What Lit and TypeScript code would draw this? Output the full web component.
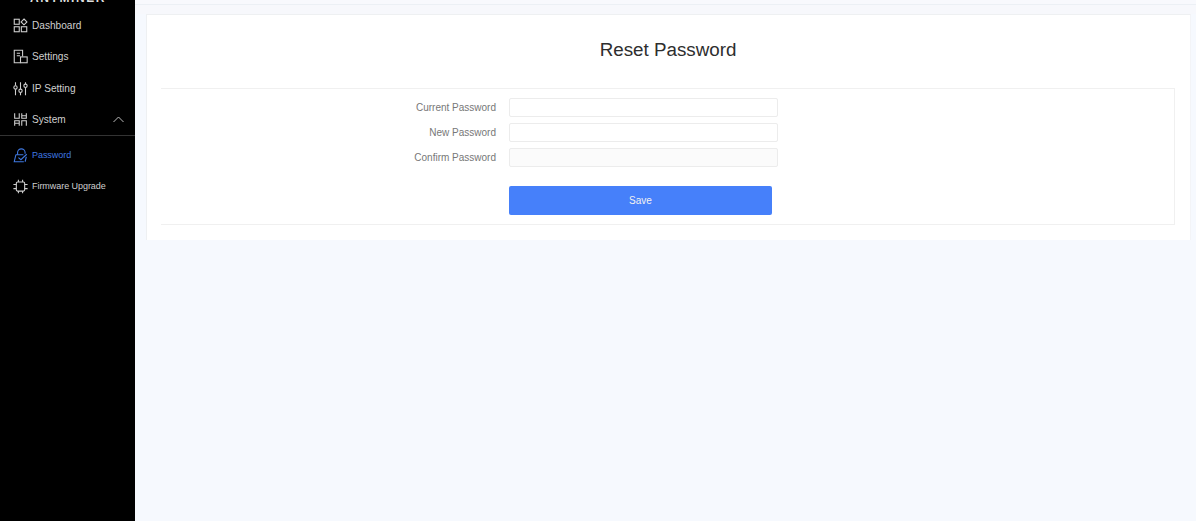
import { LitElement, html, css, svg } from "lit";
import { customElement } from "lit/decorators.js";

const icons = {
  dash: svg`<rect x="1.500" y="1.500" width="6" height="6"/><path d="M13.200 1.200 16.700 4.700 13.200 8.200 9.700 4.700Z"/><rect x="1.500" y="10.500" width="6" height="6"/><rect x="10" y="10.500" width="6.500" height="6"/>`,
  settings: svg`<path d="M9 16.500H1.500V1.500h10v7.500"/><path d="M4.500 5h4M4.500 8h4"/><rect x="9" y="9.500" width="8" height="7"/>`,
  ip: svg`<path d="M3 1.500v4M3 10v7M9 1.500v8M9 14v3M15 1.500v2M15 8v9"/><circle cx="3" cy="7.700" r="2"/><circle cx="9" cy="11.700" r="2"/><circle cx="15" cy="5.700" r="2"/>`,
  system: svg`<path d="M2 1.500v6h5.500v-6M10.500 1.500v6H16v-6M10.500 4.500H16"/><path d="M2 16.500v-6h5.500v6M2 13.500h5.500M10.500 16.500v-6H16v6"/>`,
  lock: svg`<path d="M5.500 8V5.500a4.500 4.500 0 0 1 9 0V7"/><path d="M3.500 8h9M3.500 8 1.500 16.500h11.500M16 10.500l-1.500 6"/><path d="m6.500 11.500 3 2.500 7-6.500"/>`,
  chip: svg`<rect x="4" y="3.500" width="10" height="11" rx="1.500"/><path d="M.5 6.500H4M.5 11.500H4M14 6.500h3.500M14 11.500h3.500M6.500 1v2.500M11.500 1v2.500M6.500 14.500V17M11.500 14.500V17"/>`,
};

@customElement("app-root")
export class AppRoot extends LitElement {
  static styles = css`
    :host { display: block; height: 521px; overflow: hidden; font-family: "Liberation Sans", Arial, sans-serif; background: #f6f9fe; }
    .app { display: flex; height: 521px; }
    .side { width: 135px; flex: none; background: #000; color: #cfcfcf; overflow: hidden; position: relative; }
    .logo { position: absolute; top: -9px; left: 30px; font-size: 12px; letter-spacing: 1.6px; font-weight: 700; color: #ddd; line-height: 14px; }
    .menu { display: flex; flex-direction: column; padding-top: 9px; }
    .item { box-sizing: border-box; height: 31.3px; display: flex; align-items: center; padding: 2px 0 0 13px; font-size: 10.1px; position: relative; }
    .icon { width: 15px; height: 15px; fill: none; stroke: #cfcfcf; stroke-width: 1.3; flex: none; margin-right: 4px; }
    .sys { border-bottom: 1px solid #333; height: 33px; padding-top: 1px; }
    .chev { position: absolute; left: 113px; top: 13px; width: 11px; height: 7px; fill: none; stroke: #bbb; stroke-width: 1; }
    .sub { font-size: 9px; letter-spacing: -0.05px; padding-top: 1px; }
    .sub.first { margin-top: 3px; }
    .active { color: #3f78e0; }
    .active .icon { stroke: #3f78e0; }
    .main { flex: 1; min-width: 0; display: flex; flex-direction: column; }
    .strip { height: 4px; background: #f8f9fd; border-bottom: 1px solid #ecf0f5; }
    .gap { height: 9px; background: #f7f8fc; }
    .card { margin-left: 11px; margin-right: 5px; height: 226px; background: #fff; border: 1px solid #eef0f2; border-bottom: none; border-right-color: #f3f4f7; box-sizing: border-box; padding: 0 15px 0 14px; }
    h1 { font-size: 18.800px; font-weight: 400; color: #2e2e2e; text-align: center; margin: 25px 0 0; line-height: 20px; height: 48px; }
    .panel { height: 137px; border: 1px solid #f0f0f0; border-left: none; box-sizing: border-box; padding: 9px 0 0 0; }
    .form { display: flex; flex-direction: column; gap: 6px; }
    .row { display: flex; align-items: center; height: 19px; }
    label { width: 335px; text-align: right; font-size: 10px; color: #777; flex: none; }
    .field { margin-left: 13px; width: 269px; height: 19px; box-sizing: border-box; border: 1px solid #ececec; border-radius: 2px; background: #fff; }
    .field.off { background: #fbfbfb; }
    .btnrow { margin: 19px 0 0 348px; }
    button { display: block; width: 263px; height: 29px; border: none; border-radius: 2px; background: #4680fa; color: #f2f2f2; font: 10px "Liberation Sans", Arial, sans-serif; padding: 0 0 1px; }
  `;

  render() {
    const rows = [["Current Password", ""], ["New Password", ""], ["Confirm Password", "off"]];
    return html`<div class="app">
      <nav class="side">
        <div class="logo">ANTMINER</div>
        <div class="menu">
          <div class="item"><svg class="icon" viewBox="0 0 18 18">${icons.dash}</svg>Dashboard</div>
          <div class="item"><svg class="icon" viewBox="0 0 18 18">${icons.settings}</svg>Settings</div>
          <div class="item"><svg class="icon" viewBox="0 0 18 18">${icons.ip}</svg>IP Setting</div>
          <div class="item sys"><svg class="icon" viewBox="0 0 18 18">${icons.system}</svg>System
            <svg class="chev" viewBox="0 0 11 7"><path d="M.5 6 5.500 1l5 5"/></svg></div>
          <div class="item sub first active"><svg class="icon" viewBox="0 0 18 18">${icons.lock}</svg>Password</div>
          <div class="item sub"><svg class="icon" viewBox="0 0 18 18">${icons.chip}</svg>Firmware Upgrade</div>
        </div>
      </nav>
      <main class="main">
        <div class="strip"></div>
        <div class="gap"></div>
        <section class="card">
          <h1>Reset Password</h1>
          <div class="panel">
            <div class="form">
              ${rows.map(([l, c]) => html`<div class="row"><label>${l}</label><div class="field ${c}"></div></div>`)}
            </div>
            <div class="btnrow"><button>Save</button></div>
          </div>
        </section>
      </main>
    </div>`;
  }
}
